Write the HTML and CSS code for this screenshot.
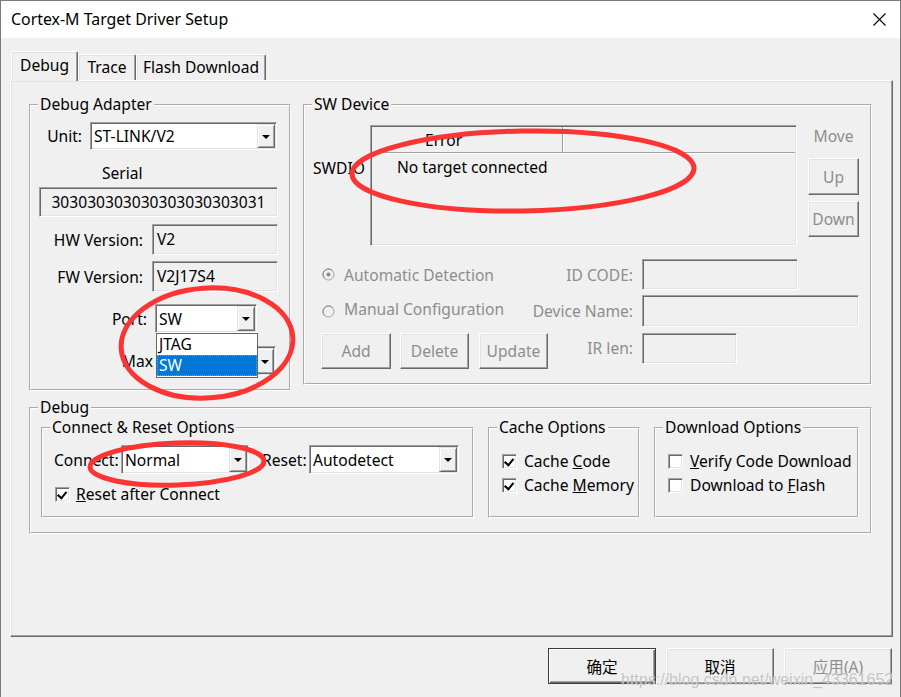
FILE: index.html
```html
<!DOCTYPE html>
<html lang="zh-CN">

<head>
    <meta charset="UTF-8">
    <title>Cortex-M Target Driver Setup</title>
    <link rel="stylesheet" href="styles.css">
</head>

<body>
    <div class="window">
        <div class="titlebar">
            <span class="title">Cortex-M Target Driver Setup</span>
            <svg class="close-x" width="13" height="13" viewBox="0 0 13 13">
                <path d="M0.5 0.5L12.5 12.5M12.5 0.5L0.5 12.5" stroke="#000" stroke-width="1.1" fill="none" />
            </svg>
        </div>

        <div class="client">
            <div class="tabs">
                <div class="tab active tab-debug">Debug</div>
                <div class="tab tab-trace">Trace</div>
                <div class="tab tab-flash">Flash Download</div>
            </div>

            <div class="panel">
                <div class="top-row">
                    <!-- Debug Adapter -->
                    <fieldset class="group adapter">
                        <legend>Debug Adapter</legend>

                        <div class="row unit-row">
                            <span class="lbl">Unit:</span>
                            <div class="combo unit-combo"><span class="val">ST-LINK/V2</span><span class="drop"></span></div>
                        </div>

                        <div class="serial-cap">Serial</div>
                        <div class="field serial">303030303030303030303031</div>

                        <div class="row ver-row hw-row">
                            <span class="lbl">HW Version:</span>
                            <div class="field ver">V2</div>
                        </div>
                        <div class="row ver-row fw-row">
                            <span class="lbl">FW Version:</span>
                            <div class="field ver">V2J17S4</div>
                        </div>

                        <div class="row port-row">
                            <span class="lbl">Port:</span>
                            <div class="combo-wrap">
                                <div class="combo port-combo"><span class="val">SW</span><span class="drop"></span></div>
                                <div class="droplist">
                                    <div class="opt">JTAG</div>
                                    <div class="opt selected">SW</div>
                                </div>
                            </div>
                        </div>

                        <div class="row max-row">
                            <span class="lbl">Max</span>
                            <div class="combo max-combo"><span class="val"></span><span class="drop"></span></div>
                        </div>
                    </fieldset>

                    <!-- SW Device -->
                    <fieldset class="group swdevice">
                        <legend>SW Device</legend>

                        <div class="sw-top">
                            <div class="swdio">SWDIO</div>
                            <div class="listbox">
                                <div class="list-head">
                                    <div class="col-1">Error</div>
                                    <div class="col-2"></div>
                                </div>
                                <div class="list-row">No target connected</div>
                            </div>
                            <div class="move-col">
                                <div class="move-cap disabled">Move</div>
                                <div class="btn disabled up-btn">Up</div>
                                <div class="btn disabled down-btn">Down</div>
                            </div>
                        </div>

                        <div class="sw-line line-a">
                            <div class="sw-left">
                                <svg class="radio" width="13" height="13" viewBox="0 0 13 13">
                                    <circle cx="6.5" cy="6.5" r="5.5" fill="#f0f0f0" stroke="#a0a0a0" />
                                    <path d="M2.6 10.4A5.5 5.5 0 0 1 10.4 2.6" stroke="#8a8a8a" fill="none" />
                                    <circle cx="6.5" cy="6.5" r="2" fill="#8d8d8d" />
                                </svg>
                                <span class="disabled">Automatic Detection</span>
                            </div>
                            <span class="sw-lbl disabled">ID CODE:</span>
                            <div class="field idcode"></div>
                        </div>

                        <div class="sw-line line-b">
                            <div class="sw-left">
                                <svg class="radio" width="13" height="13" viewBox="0 0 13 13">
                                    <circle cx="6.5" cy="6.5" r="5.5" fill="#f0f0f0" stroke="#a0a0a0" />
                                    <path d="M2.6 10.4A5.5 5.5 0 0 1 10.4 2.6" stroke="#8a8a8a" fill="none" />
                                </svg>
                                <span class="disabled radio-up">Manual Configuration</span>
                            </div>
                            <span class="sw-lbl disabled">Device Name:</span>
                            <div class="field devname"></div>
                        </div>

                        <div class="sw-line line-c">
                            <div class="sw-left sw-btns">
                                <div class="btn disabled add-btn">Add</div>
                                <div class="btn disabled del-btn">Delete</div>
                                <div class="btn disabled upd-btn">Update</div>
                            </div>
                            <span class="sw-lbl disabled ir-lbl">IR len:</span>
                            <div class="field irlen"></div>
                        </div>
                    </fieldset>
                </div>

                <!-- Debug -->
                <fieldset class="group debug">
                    <legend>Debug</legend>
                    <div class="sub-row">
                        <fieldset class="group sub connect">
                            <legend>Connect &amp; Reset Options</legend>
                            <div class="row connect-row">
                                <span class="lbl connect-lbl">Connect:</span>
                                <div class="combo connect-combo"><span class="val">Normal</span><span class="drop"></span></div>
                                <span class="lbl reset-lbl">Reset:</span>
                                <div class="combo reset-combo"><span class="val">Autodetect</span><span class="drop"></span></div>
                            </div>
                            <div class="check-row reset-after">
                                <span class="check on"></span>
                                <span><u>R</u>eset after Connect</span>
                            </div>
                        </fieldset>

                        <fieldset class="group sub cache">
                            <legend>Cache Options</legend>
                            <div class="checks">
                                <div class="check-row"><span class="check on"></span><span>Cache <u>C</u>ode</span></div>
                                <div class="check-row"><span class="check on"></span><span>Cache <u>M</u>emory</span></div>
                            </div>
                        </fieldset>

                        <fieldset class="group sub download">
                            <legend>Download Options</legend>
                            <div class="checks">
                                <div class="check-row"><span class="check"></span><span><u>V</u>erify Code Download</span></div>
                                <div class="check-row"><span class="check"></span><span>Download to <u>F</u>lash</span></div>
                            </div>
                        </fieldset>
                    </div>
                </fieldset>
            </div>

            <div class="buttons">
                <div class="btn dlg-btn default">确定</div>
                <div class="btn dlg-btn">取消</div>
                <div class="btn dlg-btn disabled">应用(A)</div>
            </div>
        </div>

        <div class="watermark">https://blog.csdn.net/weixin_43361652</div>

        <!-- red hand-drawn marks over the screenshot -->
        <svg class="marks" width="901" height="697" viewBox="0 0 901 697">
            <g fill="none" stroke="#fc3434" stroke-width="5">
                <ellipse cx="207" cy="343" rx="86" ry="55" transform="rotate(-4 207 343)" />
                <ellipse cx="523" cy="171" rx="171" ry="40" transform="rotate(-1 523 171)" />
                <ellipse cx="177" cy="464" rx="87" ry="21" transform="rotate(-2 177 464)" />
            </g>
        </svg>
    </div>
</body>

</html>
```

FILE: styles.css
```css
* {
    box-sizing: border-box;
}

body {
    margin: 0;
    width: 901px;
    height: 697px;
    overflow: hidden;
    font-family: "Noto Sans", "Noto Sans CJK SC", sans-serif;
    font-size: 15.6px;
    color: #000;
    background-color: #f0f0f0;
}

.window {
    position: relative;
    height: 697px;
    border: 1px solid #7a7a7a;
    border-bottom: none;
    background-color: #f0f0f0;
}

.titlebar {
    height: 37px;
    background-color: #fff;
    display: flex;
    align-items: center;
    justify-content: space-between;
    padding: 0 14px 0 10px;
}

.title {
    font-size: 15.9px;
    margin-top: -1px;
}

.client {
    padding: 13px 7px 0 9px;
}

/* tabs */
.tabs {
    display: flex;
    align-items: flex-end;
    height: 29px;
    margin-left: 1px;
}

.tab {
    height: 26px;
    line-height: 24px;
    text-align: center;
    border: 1px solid;
    border-color: #fff #696969 transparent #fff;
    border-bottom: none;
    box-shadow: inset -1px 0 #a0a0a0, inset 1px 1px #e3e3e3;
    border-radius: 2px 2px 0 0;
    background-color: #f0f0f0;
}

.tab.active {
    height: 30px;
    line-height: 26px;
    margin-bottom: -1px;
    position: relative;
    z-index: 1;
}

.tab-debug { width: 67px; }
.tab-trace { width: 58px; }
.tab-flash { width: 130px; }

.panel {
    width: 883px;
    height: 557px;
    border: 1px solid;
    border-color: #fff #696969 #696969 #fff;
    box-shadow: inset -1px -1px #a0a0a0, inset 1px 1px #e3e3e3;
    padding: 14px 0 0 18px;
}

.top-row {
    display: flex;
    align-items: flex-start;
    gap: 12px;
}

/* group boxes */
.group {
    margin: 0;
    padding: 0;
    min-width: 0;
    border: 2px groove #fff;
}

.group legend {
    margin-left: 7px;
    padding: 0 2px;
    height: 20px;
    line-height: 19px;
}

.adapter {
    width: 262px;
    height: 296px;
}

.swdevice {
    width: 569px;
    height: 290px;
}

.row {
    display: flex;
    align-items: center;
}

.lbl {
    flex: none;
    text-align: right;
}

/* sunken edit box */
.field {
    background-color: #f0f0f0;
    border: 1px solid;
    border-color: #a0a0a0 #fff #fff #a0a0a0;
    box-shadow: inset 1px 1px #696969, inset -1px -1px #e3e3e3;
    display: flex;
    align-items: center;
    padding-left: 4px;
}

/* combo box */
.combo {
    display: flex;
    height: 28px;
    padding: 1px;
    background-color: #fff;
    border: 1px solid;
    border-color: #a0a0a0 #fff #fff #a0a0a0;
    box-shadow: inset 1px 1px #696969, inset -1px -1px #e3e3e3;
}

.combo .val {
    flex: 1;
    display: flex;
    align-items: center;
    padding-left: 2px;
    white-space: nowrap;
    overflow: hidden;
}

.combo .drop {
    width: 18px;
    display: flex;
    align-items: center;
    justify-content: center;
    background-color: #f0f0f0;
    border: 1px solid;
    border-color: #e3e3e3 #696969 #696969 #e3e3e3;
    box-shadow: inset 1px 1px #fff, inset -1px -1px #a0a0a0;
}

.combo .drop::after {
    content: "";
    border-left: 4px solid transparent;
    border-right: 4px solid transparent;
    border-top: 4px solid #000;
    margin-top: 1px;
}

/* raised button */
.btn {
    flex: none;
    display: flex;
    align-items: center;
    justify-content: center;
    background-color: #f0f0f0;
    border: 1px solid;
    border-color: #fff #696969 #696969 #fff;
    box-shadow: inset -1px -1px #a0a0a0, inset 1px 1px #e3e3e3;
}

.disabled {
    color: #8d8d8d;
}

/* Debug Adapter contents */
.unit-row {
    margin-top: 7px;
}

.unit-row .lbl {
    width: 51px;
}

.unit-combo {
    width: 187px;
    margin-left: 8px;
}

.serial-cap {
    margin-top: 13px;
    padding-left: 71px;
    line-height: 20px;
}

.serial {
    margin: 4px 0 0 8px;
    width: 239px;
    height: 30px;
    justify-content: center;
    padding-left: 0;
}

.hw-row {
    margin-top: 7px;
}

.fw-row {
    margin-top: 6px;
}

.ver-row .lbl {
    width: 112px;
}

.ver {
    width: 126px;
    height: 31px;
    margin-left: 9px;
    align-items: flex-start;
    padding-top: 3px;
}

.port-row {
    margin-top: 12px;
}

.port-row .lbl {
    width: 116px;
}

.combo-wrap {
    position: relative;
    margin-left: 8px;
}

.port-combo {
    width: 102px;
    height: 29px;
}

.droplist {
    position: absolute;
    top: 100%;
    left: 1px;
    z-index: 2;
    width: 102px;
    height: 45px;
    background-color: #fff;
    border: 1px solid #646464;
}

.droplist .opt {
    height: 21px;
    line-height: 21px;
    padding-left: 2px;
}

.droplist .opt.selected {
    background-color: #0078d7;
    color: #fff;
    outline: 1px dotted #c8893c;
    outline-offset: -1px;
}

.max-row {
    margin-top: 13px;
}

.max-row .lbl {
    width: 122px;
}

.max-combo {
    width: 118px;
    height: 30px;
    margin-left: 5px;
}

/* SW Device contents */
.sw-top {
    display: flex;
    align-items: flex-start;
}

.swdio {
    width: 65px;
    padding-left: 8px;
    margin-top: 43px;
    line-height: 20px;
}

.listbox {
    width: 427px;
    height: 121px;
    margin-top: 10px;
    padding: 1px;
    border: 1px solid;
    border-color: #a0a0a0 #fff #fff #a0a0a0;
    box-shadow: inset 1px 1px #696969, inset -1px -1px #e3e3e3;
}

.list-head {
    display: flex;
    height: 26px;
    border-bottom: 1px solid #a0a0a0;
    box-shadow: 0 1px #fff;
}

.list-head .col-1 {
    width: 191px;
    padding-left: 53px;
    line-height: 26px;
    border-right: 1px solid #a0a0a0;
    box-shadow: 1px 0 #fff;
}

.list-row {
    height: 28px;
    line-height: 28px;
    padding-left: 25px;
}

.move-col {
    width: 51px;
    margin-left: 11px;
    display: flex;
    flex-direction: column;
}

.move-cap {
    margin-top: 11px;
    line-height: 20px;
    text-align: center;
}

.up-btn {
    margin-top: 12px;
    height: 37px;
}

.down-btn {
    margin-top: 6px;
    height: 36px;
}

.sw-line {
    display: flex;
    align-items: center;
}

.line-a {
    margin-top: 13px;
}

.line-b {
    margin-top: 5px;
}

.line-c {
    margin-top: 6px;
    align-items: flex-start;
}

.sw-left {
    flex: none;
    width: 225px;
    padding-left: 17px;
    display: flex;
    align-items: center;
    gap: 9px;
}

.radio-up {
    margin-top: -5px;
}

.sw-btns {
    padding-left: 16px;
    gap: 0;
}

.sw-lbl {
    width: 103px;
    text-align: right;
    white-space: nowrap;
}

.ir-lbl {
    line-height: 31px;
}

.idcode {
    width: 156px;
    height: 31px;
    margin-left: 9px;
}

.devname {
    width: 217px;
    height: 32px;
    margin-left: 9px;
}

.irlen {
    width: 95px;
    height: 31px;
    margin-left: 9px;
}

.add-btn {
    width: 70px;
    height: 36px;
}

.del-btn,
.upd-btn {
    width: 69px;
    height: 36px;
}

.del-btn {
    margin-left: 9px;
}

.upd-btn {
    margin-left: 10px;
}

/* Debug group */
.debug {
    width: 843px;
    height: 136px;
    margin-top: 7px;
}

.sub-row {
    display: flex;
    gap: 14px;
    padding-left: 10px;
}

.sub {
    height: 100px;
}

.connect {
    width: 433px;
}

.cache {
    width: 152px;
}

.download {
    width: 205px;
}

.connect-row {
    margin-top: 7px;
    padding-left: 11px;
}

.connect-lbl {
    width: 67px;
    text-align: left;
}

.connect-combo {
    width: 128px;
    height: 29px;
}

.reset-lbl {
    width: 47px;
    margin-left: 13px;
    text-align: left;
}

.reset-combo {
    width: 150px;
    height: 29px;
}

.check-row {
    display: flex;
    align-items: center;
    gap: 7px;
    height: 24px;
}

.reset-after {
    margin-top: 8px;
    padding-left: 12px;
    gap: 6px;
}

.checks {
    margin-top: 11px;
    padding-left: 12px;
}

.check {
    flex: none;
    width: 15px;
    height: 15px;
    background-color: #fff;
    border: 1px solid;
    border-color: #a0a0a0 #fff #fff #a0a0a0;
    box-shadow: inset 1px 1px #696969, inset -1px -1px #e3e3e3;
    position: relative;
}

.check.on::after {
    content: "";
    position: absolute;
    left: 3px;
    top: 2px;
    width: 4px;
    height: 7px;
    border-right: 2px solid #000;
    border-bottom: 2px solid #000;
    transform: rotate(40deg);
    transform-origin: 60% 50%;
}

/* dialog buttons */
.buttons {
    display: flex;
    justify-content: flex-end;
    gap: 10px;
    margin-top: 11px;
    padding-right: 1px;
}

.dlg-btn {
    width: 108px;
    height: 36px;
}

.dlg-btn.default {
    border-color: #3c3c3c;
    box-shadow: inset 1px 1px #fff, inset -1px -1px #696969, inset -2px -2px #a0a0a0;
}

/* overlays */
.watermark {
    position: absolute;
    left: 620px;
    top: 669px;
    z-index: 4;
    font-family: "Liberation Sans", Arial, sans-serif;
    font-size: 16px;
    line-height: 20px;
    color: rgba(170, 170, 170, 0.7);
    text-shadow: 0 0 1px rgba(255, 255, 255, 0.9);
    white-space: nowrap;
}

.marks {
    position: absolute;
    left: -1px;
    top: -1px;
    z-index: 5;
    pointer-events: none;
}
```
